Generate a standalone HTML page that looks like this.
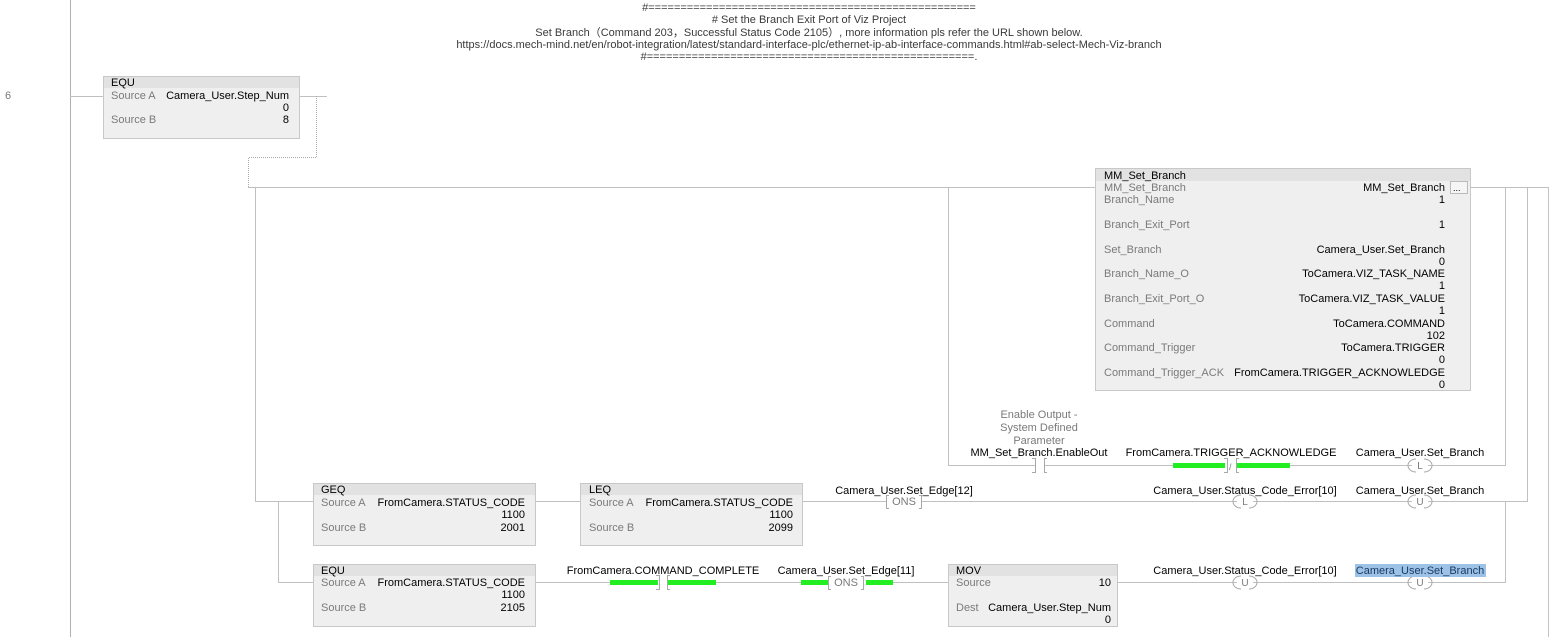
<!DOCTYPE html>
<html><head><meta charset="utf-8"><style>
html,body{margin:0;padding:0;background:#fff;width:1555px;height:637px;overflow:hidden}
svg{display:block}
text{font-family:"Liberation Sans",Arial,sans-serif;font-size:11px;fill:#000}
.g{fill:#7a7a7a}
.h{fill:#3a3a3a;font-size:11px}
.w{stroke:#c0c0c0;stroke-width:1;fill:none}
.bx{fill:#efefef;stroke:#c8c8c8;stroke-width:1}
.hd{fill:#e2e2e2}
.gr{fill:#22ee22}
.br{stroke:#a8a8a8;stroke-width:1;fill:none}
</style></head><body>
<svg width="1555" height="637" viewBox="0 0 1555 637" xmlns="http://www.w3.org/2000/svg">
<line x1="70.5" y1="0" x2="70.5" y2="637" stroke="#b0b0b0"/>
<text x="5" y="99" class="g">6</text>
<g text-anchor="middle">
<text x="809" y="11" class="h">#===================================================</text>
<text x="809" y="23" class="h"># Set the Branch Exit Port of Viz Project</text>
<text x="809" y="36" class="h">Set Branch（Command 203，Successful Status Code 2105）, more information pls refer the URL shown below.</text>
<text x="809" y="48" class="h">https://docs.mech-mind.net/en/robot-integration/latest/standard-interface-plc/ethernet-ip-ab-interface-commands.html#ab-select-Mech-Viz-branch</text>
<text x="809" y="60" class="h">#===================================================.</text>
</g>
<path class="w" d="M70 96.5H103M299 96.5H327"/>
<path d="M316.5 96V157.5H248.5V187" stroke="#aaa" stroke-dasharray="1,1" fill="none"/>
<path class="w" d="M248 187.5H1095M1471 187.5H1548"/>
<path class="w" d="M255.5 187V501.5H313M278.5 501V582.5H313"/>
<path class="w" d="M535 501.5H580M802 501.5H886M922 501.5H1237M1253 501.5H1412M1428 501.5H1527.5V187"/>
<path class="w" d="M948.5 187V465.5H1035M1044 465.5H1173M1290 465.5H1412M1428 465.5H1505.5V187"/>
<path class="w" d="M535 582.5H610M716 582.5H801M893 582.5H948M1117 582.5H1237M1253 582.5H1412M1428 582.5H1505.5V501"/>
<line x1="1548.5" y1="187" x2="1548.5" y2="637" stroke="#c4c4c4"/>
<rect class="bx" x="103.5" y="76.5" width="196" height="62"/>
<rect class="hd" x="104" y="77" width="195" height="11"/>
<text x="111" y="86">EQU</text>
<text x="111" y="99" class="g">Source A</text><text x="289" y="99" text-anchor="end">Camera_User.Step_Num</text>
<text x="289" y="111" text-anchor="end">0</text>
<text x="111" y="123" class="g">Source B</text><text x="289" y="123" text-anchor="end">8</text>
<rect class="bx" x="1095.5" y="168.5" width="375" height="222"/>
<rect class="hd" x="1096" y="169" width="374" height="12"/>
<text x="1104" y="179">MM_Set_Branch</text>
<text x="1104" y="191" class="g">MM_Set_Branch</text>
<text x="1104" y="203" class="g">Branch_Name</text>
<text x="1104" y="228" class="g">Branch_Exit_Port</text>
<text x="1104" y="253" class="g">Set_Branch</text>
<text x="1104" y="277" class="g">Branch_Name_O</text>
<text x="1104" y="302" class="g">Branch_Exit_Port_O</text>
<text x="1104" y="327" class="g">Command</text>
<text x="1104" y="351" class="g">Command_Trigger</text>
<text x="1104" y="376" class="g">Command_Trigger_ACK</text>
<g text-anchor="end">
<text x="1445" y="191">MM_Set_Branch</text>
<text x="1445" y="203">1</text>
<text x="1445" y="228">1</text>
<text x="1445" y="253">Camera_User.Set_Branch</text>
<text x="1445" y="265">0</text>
<text x="1445" y="277">ToCamera.VIZ_TASK_NAME</text>
<text x="1445" y="289">1</text>
<text x="1445" y="302">ToCamera.VIZ_TASK_VALUE</text>
<text x="1445" y="314">1</text>
<text x="1445" y="327">ToCamera.COMMAND</text>
<text x="1445" y="339">102</text>
<text x="1445" y="351">ToCamera.TRIGGER</text>
<text x="1445" y="363">0</text>
<text x="1445" y="376">FromCamera.TRIGGER_ACKNOWLEDGE</text>
<text x="1445" y="388">0</text>
</g>
<rect x="1450.5" y="181.5" width="17" height="12" fill="#f5f5f5" stroke="#bbb"/>
<text x="1453" y="191" style="font-size:9px">...</text>
<g text-anchor="middle">
<text x="1039" y="418" class="g">Enable Output -</text>
<text x="1039" y="431" class="g">System Defined</text>
<text x="1039" y="444" class="g">Parameter</text>
</g>
<text x="1039" y="456" text-anchor="middle">MM_Set_Branch.EnableOut</text>
<path class="br" d="M1032 458.5H1035.5V472.5H1032M1047 458.5H1044.5V472.5H1047"/>
<text x="1231" y="456" text-anchor="middle">FromCamera.TRIGGER_ACKNOWLEDGE</text>
<rect class="gr" x="1173" y="463" width="52" height="5"/>
<rect class="gr" x="1237" y="463" width="53" height="5"/>
<path class="br" d="M1224 458.5H1227.5V472.5H1224M1239 458.5H1236.5V472.5H1239"/>
<text x="1229" y="470" class="g" style="font-size:9px">/</text>
<text x="1420" y="456" text-anchor="middle">Camera_User.Set_Branch</text>
<g class="br">
<path d="M1416 459A8 6.5 0 0 0 1416 472M1424 459A8 6.5 0 0 1 1424 472"/>
<path d="M1241 495A8 6.5 0 0 0 1241 508M1249 495A8 6.5 0 0 1 1249 508"/>
<path d="M1416 495A8 6.5 0 0 0 1416 508M1424 495A8 6.5 0 0 1 1424 508"/>
<path d="M1241 576A8 6.5 0 0 0 1241 589M1249 576A8 6.5 0 0 1 1249 589"/>
<path d="M1416 576A8 6.5 0 0 0 1416 589M1424 576A8 6.5 0 0 1 1424 589"/>
</g>
<g text-anchor="middle">
<text x="1420" y="469" class="g" style="font-size:10px">L</text>
<text x="1245" y="505" class="g" style="font-size:10px">L</text>
<text x="1420" y="505" class="g" style="font-size:10px">U</text>
<text x="1245" y="586" class="g" style="font-size:10px">U</text>
<text x="1420" y="586" class="g" style="font-size:10px">U</text>
</g>
<rect class="bx" x="313.5" y="483.5" width="222" height="62"/>
<rect class="hd" x="314" y="484" width="221" height="11"/>
<text x="321" y="493">GEQ</text>
<text x="321" y="506" class="g">Source A</text><text x="525" y="506" text-anchor="end">FromCamera.STATUS_CODE</text>
<text x="525" y="518" text-anchor="end">1100</text>
<text x="321" y="531" class="g">Source B</text><text x="525" y="531" text-anchor="end">2001</text>
<rect class="bx" x="580.5" y="483.5" width="222" height="62"/>
<rect class="hd" x="581" y="484" width="221" height="11"/>
<text x="589" y="493">LEQ</text>
<text x="589" y="506" class="g">Source A</text><text x="793" y="506" text-anchor="end">FromCamera.STATUS_CODE</text>
<text x="793" y="518" text-anchor="end">1100</text>
<text x="589" y="531" class="g">Source B</text><text x="793" y="531" text-anchor="end">2099</text>
<text x="904" y="494" text-anchor="middle">Camera_User.Set_Edge[12]</text>
<path class="br" d="M889 495.5H886.5V508.5H889M919 495.5H921.5V508.5H919"/>
<text x="904" y="505" text-anchor="middle" class="g">ONS</text>
<text x="1245" y="494" text-anchor="middle">Camera_User.Status_Code_Error[10]</text>
<text x="1420" y="494" text-anchor="middle">Camera_User.Set_Branch</text>
<rect class="bx" x="313.5" y="564.5" width="222" height="62"/>
<rect class="hd" x="314" y="565" width="221" height="11"/>
<text x="321" y="574">EQU</text>
<text x="321" y="586" class="g">Source A</text><text x="525" y="586" text-anchor="end">FromCamera.STATUS_CODE</text>
<text x="525" y="598" text-anchor="end">1100</text>
<text x="321" y="611" class="g">Source B</text><text x="525" y="611" text-anchor="end">2105</text>
<text x="663" y="574" text-anchor="middle">FromCamera.COMMAND_COMPLETE</text>
<rect class="gr" x="610" y="580" width="48" height="5"/>
<rect class="gr" x="668" y="580" width="48" height="5"/>
<path class="br" d="M656 575.5H659.5V589.5H656M670 575.5H667.5V589.5H670"/>
<text x="846" y="574" text-anchor="middle">Camera_User.Set_Edge[11]</text>
<rect class="gr" x="801" y="580" width="27" height="5"/>
<rect class="gr" x="866" y="580" width="27" height="5"/>
<path class="br" d="M831 576.5H828.5V589.5H831M861 576.5H863.5V589.5H861"/>
<text x="846" y="586" text-anchor="middle" class="g">ONS</text>
<rect class="bx" x="948.5" y="564.5" width="169" height="62"/>
<rect class="hd" x="949" y="565" width="168" height="11"/>
<text x="956" y="574">MOV</text>
<text x="956" y="586" class="g">Source</text><text x="1111" y="586" text-anchor="end">10</text>
<text x="956" y="611" class="g">Dest</text><text x="1111" y="611" text-anchor="end">Camera_User.Step_Num</text>
<text x="1111" y="623" text-anchor="end">0</text>
<text x="1245" y="574" text-anchor="middle">Camera_User.Status_Code_Error[10]</text>
<rect x="1355" y="564" width="131" height="13" fill="#9cc3e6"/>
<text x="1420" y="574" text-anchor="middle" style="fill:#1a3a66">Camera_User.Set_Branch</text>
</svg>
</body></html>
